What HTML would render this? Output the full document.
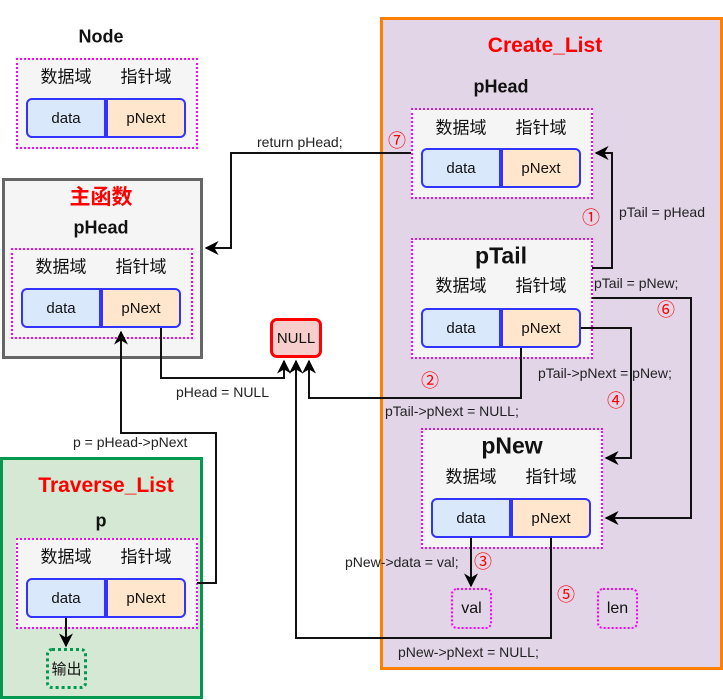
<!DOCTYPE html>
<html><head><meta charset="utf-8"><style>
*{margin:0;padding:0;box-sizing:border-box}
body{width:723px;height:700px;background:#fff;position:relative;overflow:hidden;font-family:"Liberation Sans","Noto Sans CJK SC",sans-serif;color:#111}
.a{position:absolute}
.t{position:absolute;transform:translate(-50%,-50%);white-space:nowrap}
.dot{position:absolute;border:2px dotted #ff00ff;background:#f5f5f5}
.c{position:absolute;height:40px;width:80px;border:2px solid #3333ff;display:flex;align-items:center;justify-content:center;font-size:15px}
.d{background:#dae8fc;border-radius:6px 0 0 6px}
.p{background:#ffe6cc;border-radius:0 6px 6px 0}
.lab{font-size:17px}
.b{font-weight:bold;font-size:18px}
.red{color:#ff0000;font-weight:bold;font-size:21px}
.s{font-size:14px;position:absolute;white-space:nowrap;color:#222}
.n{position:absolute;color:#ff0000;font-size:18px;transform:translate(-50%,-50%)}
</style></head><body>
<div class="a" style="left:2px;top:178px;width:201px;height:181px;background:#f5f5f5;border:3px solid #666"></div>
<div class="a" style="left:380px;top:17px;width:343px;height:653px;background:#e1d5e7;border:3px solid #ff8000"></div>
<div class="a" style="left:0;top:457px;width:203px;height:242px;background:#d5e8d4;border:3px solid #00994d"></div>

<div class="t b" style="left:101px;top:37px">Node</div>
<div class="dot" style="left:16px;top:58px;width:182px;height:91px"></div>
<div class="t lab" style="left:66px;top:75px">数据域</div><div class="t lab" style="left:146px;top:75px">指针域</div>
<div class="c d" style="left:26px;top:98px">data</div><div class="c p" style="left:106px;top:98px">pNext</div>

<div class="t red" style="left:101px;top:196px">主函数</div>
<div class="t b" style="left:101px;top:228px">pHead</div>
<div class="dot" style="left:11px;top:248px;width:182px;height:91px"></div>
<div class="t lab" style="left:61px;top:265px">数据域</div><div class="t lab" style="left:141px;top:265px">指针域</div>
<div class="c d" style="left:21px;top:288px">data</div><div class="c p" style="left:101px;top:288px">pNext</div>

<div class="a" style="left:270px;top:318px;width:52px;height:40px;background:#f8cecc;border:3px solid #ff0000;border-radius:7px;display:flex;align-items:center;justify-content:center;font-size:15px">NULL</div>

<div class="t red" style="left:545px;top:46px">Create_List</div>
<div class="t b" style="left:501px;top:87px">pHead</div>
<div class="dot" style="left:411px;top:108px;width:182px;height:91px"></div>
<div class="t lab" style="left:461px;top:126px">数据域</div><div class="t lab" style="left:541px;top:126px">指针域</div>
<div class="c d" style="left:421px;top:148px">data</div><div class="c p" style="left:501px;top:148px">pNext</div>

<div class="dot" style="left:411px;top:238px;width:182px;height:121px"></div>
<div class="t" style="left:501px;top:256px;font-weight:bold;font-size:23px">pTail</div>
<div class="t lab" style="left:461px;top:284px">数据域</div><div class="t lab" style="left:541px;top:284px">指针域</div>
<div class="c d" style="left:421px;top:308px">data</div><div class="c p" style="left:501px;top:308px">pNext</div>

<div class="dot" style="left:421px;top:428px;width:182px;height:121px"></div>
<div class="t" style="left:512px;top:446px;font-weight:bold;font-size:23px">pNew</div>
<div class="t lab" style="left:471px;top:475px">数据域</div><div class="t lab" style="left:551px;top:475px">指针域</div>
<div class="c d" style="left:431px;top:498px">data</div><div class="c p" style="left:511px;top:498px">pNext</div>

<div class="a" style="left:451px;top:588px;width:41px;height:41px;border:2px dotted #ff00ff;border-radius:6px;display:flex;align-items:center;justify-content:center;font-size:16px">val</div>
<div class="a" style="left:597px;top:588px;width:41px;height:41px;border:2px dotted #ff00ff;border-radius:6px;display:flex;align-items:center;justify-content:center;font-size:16px">len</div>

<div class="t red" style="left:106px;top:486px">Traverse_List</div>
<div class="t b" style="left:101px;top:521px">p</div>
<div class="dot" style="left:16px;top:538px;width:182px;height:91px"></div>
<div class="t lab" style="left:66px;top:555px">数据域</div><div class="t lab" style="left:146px;top:555px">指针域</div>
<div class="c d" style="left:26px;top:578px">data</div><div class="c p" style="left:106px;top:578px">pNext</div>
<div class="a" style="left:46px;top:648px;width:41px;height:41px;border:3px dotted #00994d;border-radius:6px;display:flex;align-items:center;justify-content:center;font-size:15px">输出</div>

<svg class="a" style="left:0;top:0" width="723" height="700" viewBox="0 0 723 700">
<defs><marker id="ar" viewBox="0 0 10 10" refX="9" refY="5" markerWidth="7" markerHeight="7" orient="auto"><path d="M0,0 L10,5 L0,10 L3,5 Z" fill="#000"/></marker></defs>
<g fill="none" stroke="#111" stroke-width="2">
<path d="M411,153 H231 V248 H206" marker-end="url(#ar)"/>
<path d="M592,268 H612 V153 H596" marker-end="url(#ar)"/>
<path d="M592,298 H691 V518 H606" marker-end="url(#ar)"/>
<path d="M581,328 H631 V458 H606" marker-end="url(#ar)"/>
<path d="M521,348 V398 H309 V361" marker-end="url(#ar)"/>
<path d="M161,328 V378 H284 V361" marker-end="url(#ar)"/>
<path d="M551,538 V638 H296 V361" marker-end="url(#ar)"/>
<path d="M471,538 V586" marker-end="url(#ar)"/>
<path d="M197,583 H216 V433 H121 V332" marker-end="url(#ar)"/>
<path d="M66,618 V646" marker-end="url(#ar)"/>
</g></svg>

<div class="s" style="left:257px;top:134px">return pHead;</div>
<div class="s" style="left:619px;top:204px">pTail = pHead</div>
<div class="s" style="left:594px;top:275px">pTail = pNew;</div>
<div class="s" style="left:538px;top:365px">pTail-&gt;pNext = pNew;</div>
<div class="s" style="left:385px;top:403px">pTail-&gt;pNext = NULL;</div>
<div class="s" style="left:176px;top:384px">pHead = NULL</div>
<div class="s" style="left:73px;top:434px">p = pHead-&gt;pNext</div>
<div class="s" style="left:345px;top:554px">pNew-&gt;data = val;</div>
<div class="s" style="left:398px;top:644px">pNew-&gt;pNext = NULL;</div>

<div class="n" style="left:397px;top:140px">⑦</div>
<div class="n" style="left:591px;top:217px">①</div>
<div class="n" style="left:666px;top:309px">⑥</div>
<div class="n" style="left:616px;top:400px">④</div>
<div class="n" style="left:430px;top:380px">②</div>
<div class="n" style="left:483px;top:561px">③</div>
<div class="n" style="left:566px;top:594px">⑤</div>
</body></html>
